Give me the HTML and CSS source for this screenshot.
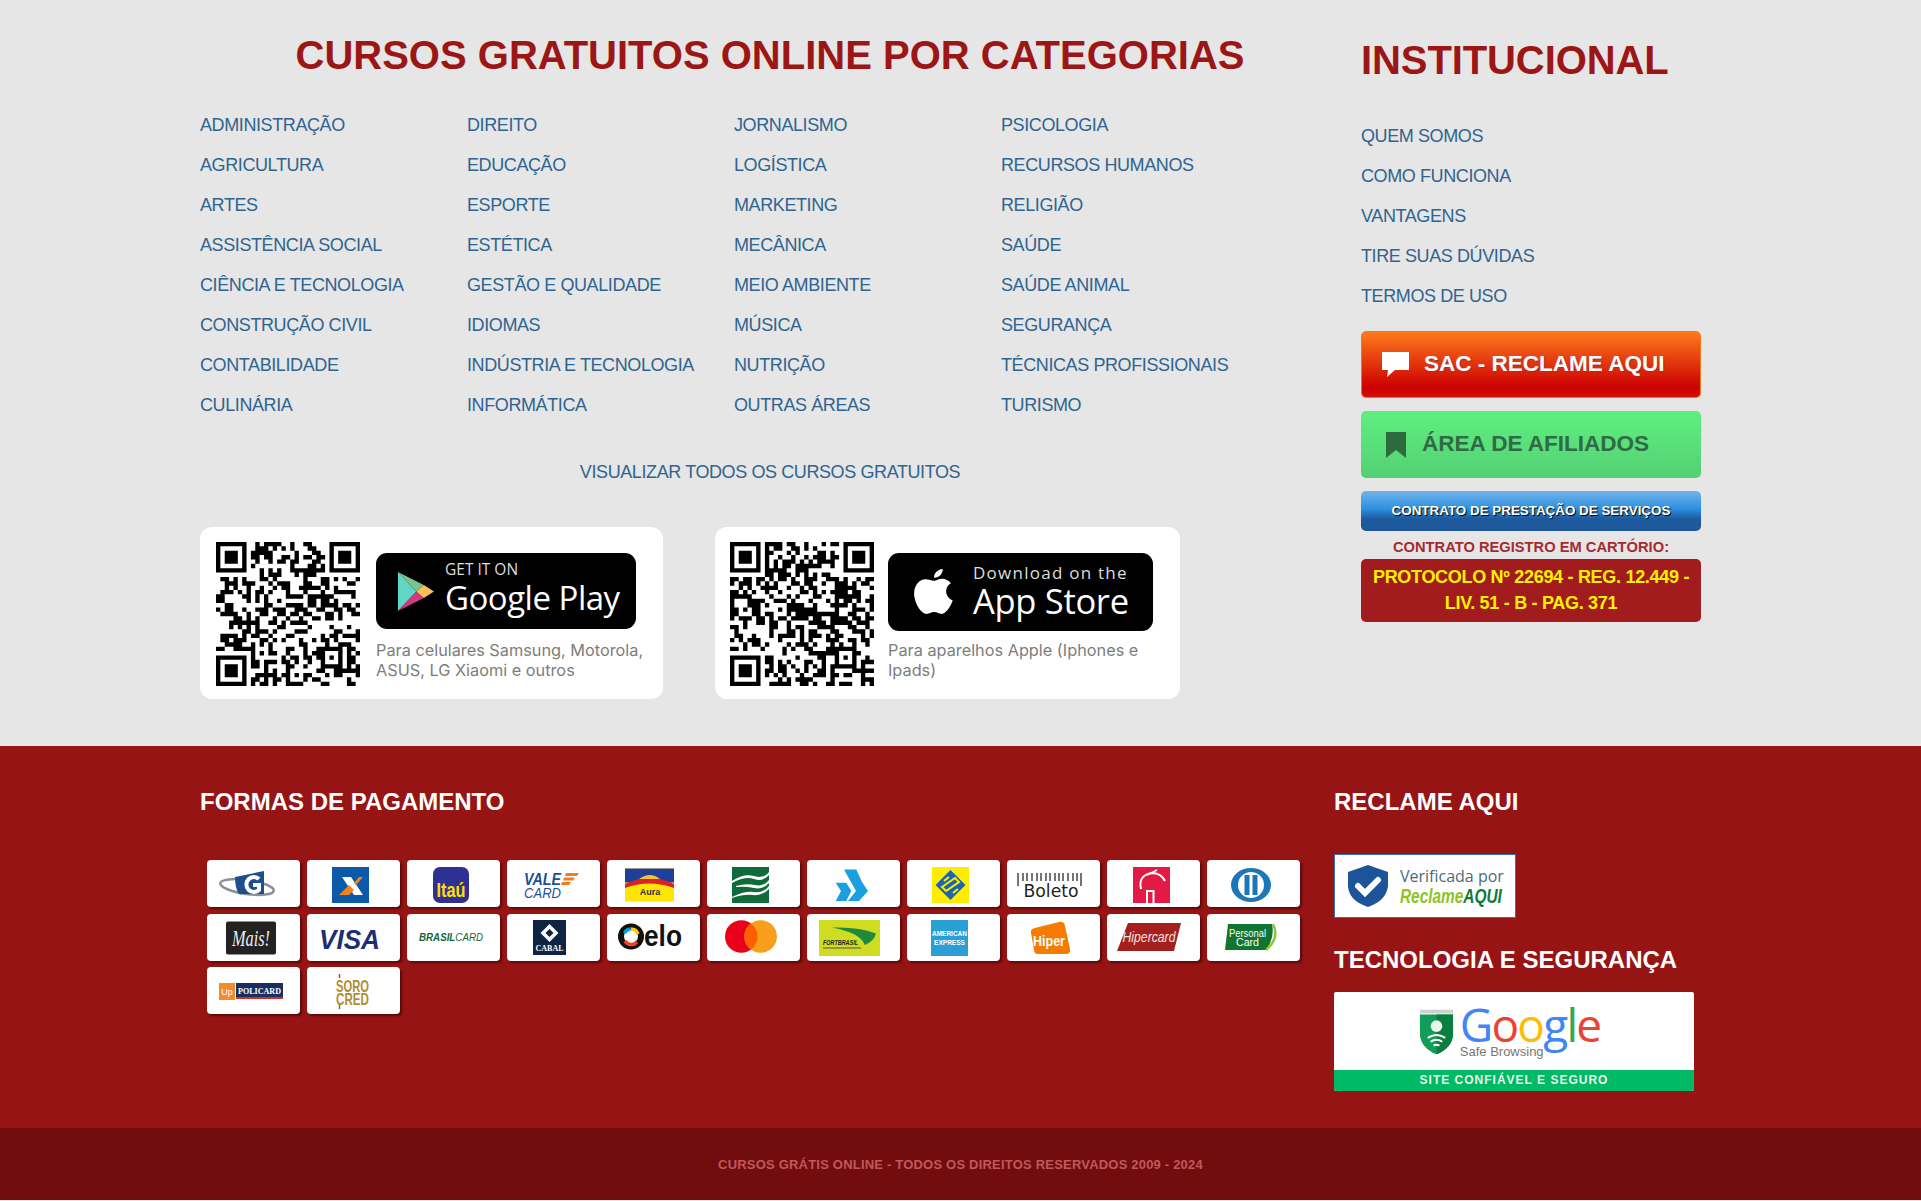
FILE: index.html
```html
<!DOCTYPE html>
<html lang="pt-BR">
<head>
    <meta charset="UTF-8">
    <title>Cursos Grátis Online</title>
    <link rel="stylesheet" href="styles.css">
</head>
<body>
    <section class="top">
        <div class="wrap top-wrap">
            <div class="cats">
                <h2 class="cats-title">CURSOS GRATUITOS ONLINE POR CATEGORIAS</h2>
                <div class="cat-grid">
                    <ul class="links">
                        <li>ADMINISTRAÇÃO</li><li>AGRICULTURA</li><li>ARTES</li><li>ASSISTÊNCIA SOCIAL</li><li>CIÊNCIA E TECNOLOGIA</li><li>CONSTRUÇÃO CIVIL</li><li>CONTABILIDADE</li><li>CULINÁRIA</li>
                    </ul>
                    <ul class="links">
                        <li>DIREITO</li><li>EDUCAÇÃO</li><li>ESPORTE</li><li>ESTÉTICA</li><li>GESTÃO E QUALIDADE</li><li>IDIOMAS</li><li>INDÚSTRIA E TECNOLOGIA</li><li>INFORMÁTICA</li>
                    </ul>
                    <ul class="links">
                        <li>JORNALISMO</li><li>LOGÍSTICA</li><li>MARKETING</li><li>MECÂNICA</li><li>MEIO AMBIENTE</li><li>MÚSICA</li><li>NUTRIÇÃO</li><li>OUTRAS ÁREAS</li>
                    </ul>
                    <ul class="links">
                        <li>PSICOLOGIA</li><li>RECURSOS HUMANOS</li><li>RELIGIÃO</li><li>SAÚDE</li><li>SAÚDE ANIMAL</li><li>SEGURANÇA</li><li>TÉCNICAS PROFISSIONAIS</li><li>TURISMO</li>
                    </ul>
                </div>
                <p class="see-all">VISUALIZAR TODOS OS CURSOS GRATUITOS</p>
                <div class="apps">
                    <div class="app-card">
                        <svg class="qr" viewBox="0 0 33 33"><path id="qr-play"/></svg>
                        <div class="app-info">
                            <div class="badge badge-play">
                                <svg class="play-icon" viewBox="0 0 40 44">
                                    <path d="M1 1L21 22 1 43z" fill="#5fd6c6"/>
                                    <path d="M1 1L29 15 21 22z" fill="#7cc48f"/>
                                    <path d="M1 43L29 29 21 22z" fill="#d0397d"/>
                                    <path d="M29 15L40 22 29 29 21 22z" fill="#fbbf55"/>
                                </svg>
                                <div class="badge-text play-text">
                                    <span class="play-small">GET IT ON</span>
                                    <span class="play-big">Google Play</span>
                                </div>
                            </div>
                            <p class="app-note">Para celulares Samsung, Motorola, ASUS, LG Xiaomi e outros</p>
                        </div>
                    </div>
                    <div class="app-card app-card-apple">
                        <svg class="qr" viewBox="0 0 33 33"><path id="qr-apple"/></svg>
                        <div class="app-info">
                            <div class="badge badge-apple">
                                <svg class="apple-icon" viewBox="0 0 40 48">
                                    <path d="M29 1c.4 4-3.400 8.800-8.400 8.600C20 5.200 24.600 1.200 29 1z" fill="#fff"/>
                                    <path d="M20.500 12.500c2 0 4.500-2 8-2 3.200 0 6.500 1.500 8.500 4.500-7 4.200-5.800 14 1.800 16.800-1.600 5-6.500 13.200-10.800 13.200-2.800 0-4-1.800-7.300-1.800-3.400 0-4.800 1.800-7.300 1.800C7.500 45 1 33.500 1 25c0-8.400 5.400-14 11-14 3.500 0 6.400 1.500 8.500 1.500z" fill="#fff"/>
                                </svg>
                                <div class="badge-text apple-text">
                                    <span class="apple-small">Download on the</span>
                                    <span class="apple-big">App Store</span>
                                </div>
                            </div>
                            <p class="app-note app-note-apple">Para aparelhos Apple (Iphones e Ipads)</p>
                        </div>
                    </div>
                </div>
            </div>
            <aside class="inst">
                <h2 class="inst-title">INSTITUCIONAL</h2>
                <ul class="links inst-links">
                    <li>QUEM SOMOS</li><li>COMO FUNCIONA</li><li>VANTAGENS</li><li>TIRE SUAS DÚVIDAS</li><li>TERMOS DE USO</li>
                </ul>
                <a class="btn btn-sac">
                    <svg class="btn-icon" viewBox="0 0 27 25"><path d="M0 0h27v18H13l-8 7 1-7H0z" fill="#fff"/></svg>
                    SAC - RECLAME AQUI
                </a>
                <a class="btn btn-afil">
                    <svg class="btn-icon-b" viewBox="0 0 20 26"><path d="M0 0h20v26L10 18 0 26z" fill="#2d6b3f"/></svg>
                    ÁREA DE AFILIADOS
                </a>
                <a class="btn-contract">CONTRATO DE PRESTAÇÃO DE SERVIÇOS</a>
                <p class="reg-label">CONTRATO REGISTRO EM CARTÓRIO:</p>
                <div class="reg-box">PROTOCOLO Nº 22694 - REG. 12.449 - LIV. 51 - B - PAG. 371</div>
            </aside>
        </div>
    </section>

    <section class="pay">
        <div class="wrap pay-wrap">
            <div class="pay-main">
                <h3 class="pay-title">FORMAS DE PAGAMENTO</h3>
                <div class="pay-grid">
                    <!-- row 1 -->
                    <div class="pay-card"><svg class="logo" viewBox="0 0 90 36"><ellipse cx="41" cy="20" rx="27" ry="7" transform="rotate(8 41 20)" fill="none" stroke="#8a8f99" stroke-width="2.500"/><path d="M29 10l29-6v23H33q-4-6-4-17z" fill="#1f4e8c"/><path d="M53 12a7.500 7.500 0 1 0 0 11v-5h-6" fill="none" stroke="#fff" stroke-width="4"/></svg></div>
                    <div class="pay-card"><svg class="logo" viewBox="0 0 90 36"><rect x="26" y="0" width="37" height="36" fill="#0b5aa8"/><path d="M36 10h9l12 18h-9z" fill="#fff"/><path d="M33 28l10-10 5 5-5 5zM48 16l5-6h4l-7 8z" fill="#f58220"/></svg></div>
                    <div class="pay-card"><svg class="logo" viewBox="0 0 90 36"><rect x="27" y="0" width="36" height="36" rx="7" fill="#2f3192"/><text x="45" y="30" class="t-itau" textLength="29" lengthAdjust="spacingAndGlyphs">Itaú</text></svg></div>
                    <div class="pay-card"><svg class="logo" viewBox="0 0 90 36"><text x="18" y="18" class="t-vale" textLength="37" lengthAdjust="spacingAndGlyphs">VALE</text><text x="18" y="31" class="t-card" textLength="37" lengthAdjust="spacingAndGlyphs">CARD</text><path d="M60 6h13l-2 3H59zM58 10.500h11l-2 3H57zM56 15h9l-2 3h-8z" fill="#f47b20"/></svg></div>
                    <div class="pay-card"><svg class="logo" viewBox="0 0 90 36"><rect x="19" y="1.500" width="49" height="33" fill="#ffe600"/><rect x="19" y="1.500" width="49" height="14" fill="#1f3f9a"/><path d="M19 17q25-12 49 0v4q-25-9-49 0z" fill="#d8232a"/><path d="M33 12q11-8 21 0z" fill="#fbc02d"/><text x="44" y="28" class="t-aura">Aura</text></svg></div>
                    <div class="pay-card"><svg class="logo" viewBox="0 0 90 36"><rect x="26" y="0" width="37" height="36" fill="#0f6b3a"/><path d="M26 14q12-8 22-5t15-4v3q-6 7-15 4t-22 4zM30 19q10-3 19-1t14-5v3q-6 7-15 5t-18-1zM26 30q12-6 22-5t15-6v3q-7 7-16 6t-21 3z" fill="#fff"/></svg></div>
                    <div class="pay-card"><svg class="logo" viewBox="0 0 90 36"><path d="M38 2.500h12.300L56 15l6 9-9 10H42l8-10-4.700-8.200z" fill="#1aa0e0"/><path d="M29.700 15.800h10.600l5 8.200-5 10H29.700l5.300-10z" fill="#1aa0e0"/></svg></div>
                    <div class="pay-card"><svg class="logo" viewBox="0 0 90 36"><rect x="26" y="0" width="37" height="36" fill="#ffed00"/><path d="M44.500 3l15 15-15 15-15-15z" fill="#1a66b3"/><path d="M36 20l13-9 4 4-13 9zM38 14l5-4M47 26l5-4" stroke="#ffed00" stroke-width="2" fill="none"/></svg></div>
                    <div class="pay-card"><svg class="logo" viewBox="0 0 90 36"><path d="M12 6v13M17 6v8M21 6v8M26 6v8M31 6v8M35 6v8M40 6v8M44 6v8M49 6v8M53 6v8M57 6v8M62 6v8M67 6v8M71 6v8M75 6v13" stroke="#666" stroke-width="1.800"/><text x="45" y="30" class="t-boleto" textLength="55" lengthAdjust="spacingAndGlyphs">Boleto</text></svg></div>
                    <div class="pay-card"><svg class="logo" viewBox="0 0 90 36"><rect x="27" y="0" width="37" height="36" fill="#e31b44"/><path d="M35 22q-3-14 11-16 9 0 13 8" fill="none" stroke="#fff" stroke-width="2"/><path d="M41 36V24h6.500v12" fill="none" stroke="#fff" stroke-width="2"/><path d="M41 8l10-5" stroke="#fff" stroke-width="1.500"/></svg></div>
                    <div class="pay-card"><svg class="logo" viewBox="0 0 90 36"><ellipse cx="45" cy="18" rx="20" ry="17" fill="#1d76b8"/><ellipse cx="45" cy="18" rx="13" ry="13" fill="#fff"/><rect x="38.500" y="8" width="5" height="20" fill="#1d76b8"/><rect x="46.500" y="8" width="5" height="20" fill="#1d76b8"/></svg></div>

                    <!-- row 2 -->
                    <div class="pay-card"><svg class="logo" viewBox="0 0 90 36"><rect x="20" y="1.500" width="50" height="33" rx="2" fill="#222"/><text x="45" y="26" class="t-mais" textLength="38" lengthAdjust="spacingAndGlyphs">Mais!</text></svg></div>
                    <div class="pay-card"><svg class="logo" viewBox="0 0 90 36"><text x="43.500" y="28.500" class="t-visa" textLength="61" lengthAdjust="spacingAndGlyphs">VISA</text></svg></div>
                    <div class="pay-card"><svg class="logo" viewBox="0 0 90 36"><text x="45" y="21" class="t-brasil" textLength="64" lengthAdjust="spacingAndGlyphs">BRASIL<tspan class="t-brasil-b">CARD</tspan></text></svg></div>
                    <div class="pay-card"><svg class="logo" viewBox="0 0 90 36"><rect x="27" y="0" width="33" height="35" fill="#0f2344"/><path d="M43.500 4l9 9-9 9-9-9z" fill="#fff"/><path d="M43.500 9l4 4-4 4-4-4z" fill="#0f2344"/><text x="43.500" y="31" class="t-cabal">CABAL</text></svg></div>
                    <div class="pay-card"><svg class="logo" viewBox="0 0 90 36"><circle cx="25" cy="16.500" r="10" fill="none" stroke="#111" stroke-width="6"/><path d="M25 9a7.500 7.500 0 0 1 7 5" stroke="#ffcb05" stroke-width="3.500" fill="none"/><path d="M18.500 13a7.500 7.500 0 0 1 6-4" stroke="#00a4e0" stroke-width="3.500" fill="none"/><path d="M19 21a7.500 7.500 0 0 0 12 1" stroke="#ef4123" stroke-width="3.500" fill="none"/><text x="38" y="26" class="t-elo" textLength="38" lengthAdjust="spacingAndGlyphs">elo</text></svg></div>
                    <div class="pay-card"><svg class="logo" viewBox="0 0 90 36"><circle cx="35.300" cy="16.500" r="16.300" fill="#eb001b"/><circle cx="54.600" cy="16.500" r="16.300" fill="#f79e1b"/><path d="M45 3.400a16.300 16.300 0 0 1 0 26.200 16.300 16.300 0 0 1 0-26.200z" fill="#ff5f00"/></svg></div>
                    <div class="pay-card"><svg class="logo" viewBox="0 0 90 36"><rect x="13" y="0" width="61" height="36" fill="#cfdc21"/><path d="M26 7.500q27-1 44 6-2 8-11.300 11.500Q55 13 26 7.500z" fill="#1e8b3a"/><text x="17" y="25" class="t-fort" textLength="35" lengthAdjust="spacingAndGlyphs">FORTBRASIL</text><path d="M17 28h38" stroke="#555" stroke-width="1"/></svg></div>
                    <div class="pay-card"><svg class="logo" viewBox="0 0 90 36"><rect x="25" y="0" width="37" height="36" fill="#2a9fd6"/><text x="43.500" y="16" class="t-amex" textLength="35" lengthAdjust="spacingAndGlyphs">AMERICAN</text><text x="43.500" y="25" class="t-amex" textLength="31" lengthAdjust="spacingAndGlyphs">EXPRESS</text></svg></div>
                    <div class="pay-card"><svg class="logo" viewBox="0 0 90 36"><path d="M29 8l24-6q5-1 6 4l5 23q1 4-3 5H32q-4 0-4-4l-3-17q-1-4 4-5z" fill="#f57c00"/><text x="43" y="26" class="t-hiper" textLength="32" lengthAdjust="spacingAndGlyphs">Hiper</text></svg></div>
                    <div class="pay-card"><svg class="logo" viewBox="0 0 90 36"><path d="M22 3h53l-7 28H11z" fill="#a3201f"/><text x="43" y="22" class="t-hipercard" textLength="53" lengthAdjust="spacingAndGlyphs">Hipercard</text></svg></div>
                    <div class="pay-card"><svg class="logo" viewBox="0 0 90 36"><path d="M22 4h44q3 14-6 26H19z" fill="#11742f"/><path d="M67 4q7 14-7 26" fill="none" stroke="#8cc63f" stroke-width="2.500"/><text x="41.500" y="16.500" class="t-personal" textLength="37" lengthAdjust="spacingAndGlyphs">Personal</text><text x="41.500" y="26" class="t-personal" textLength="23" lengthAdjust="spacingAndGlyphs">Card</text></svg></div>

                    <!-- row 3 -->
                    <div class="pay-card"><svg class="logo" viewBox="0 0 90 36"><rect x="13" y="9" width="16" height="17" fill="#f58a2b"/><text x="21" y="21" class="t-up">Up</text><rect x="30" y="9" width="47" height="14" fill="#1b2f5e"/><rect x="30" y="23" width="47" height="2" fill="#d32f2f"/><text x="53.500" y="19.500" class="t-poli" textLength="43" lengthAdjust="spacingAndGlyphs">POLICARD</text></svg></div>
                    <div class="pay-card"><svg class="logo" viewBox="0 0 90 36"><text x="46.500" y="17.500" class="t-soro" textLength="33" lengthAdjust="spacingAndGlyphs">SORO</text><text x="46.500" y="31" class="t-soro" textLength="33" lengthAdjust="spacingAndGlyphs">CRED</text><path d="M33.500 0v4" stroke="#c0392b" stroke-width="1.500"/><path d="M33.500 31v4" stroke="#3d8b3d" stroke-width="1.500"/></svg></div>
                </div>
            </div>
            <aside class="pay-side">
                <h3 class="pay-title">RECLAME AQUI</h3>
                <div class="ra-seal">
                    <svg class="ra-shield" viewBox="0 0 44 44"><path d="M22 1l20 7v14q-2 15-20 21Q3 37 2 22V8z" fill="#1d5497"/><path d="M12 22l7 7 13-13" fill="none" stroke="#fff" stroke-width="6" stroke-linecap="round"/></svg>
                    <div class="ra-text">
                        <span class="ra-small">Verificada por</span>
                        <span class="ra-big"><span class="ra-green">Reclame</span>AQUI</span>
                    </div>
                </div>
                <h3 class="tec-title">TECNOLOGIA E SEGURANÇA</h3>
                <div class="safe">
                    <div class="safe-top">
                        <svg class="safe-shield" viewBox="0 0 36 48"><path d="M1 1h34v4H1z" fill="#cfcfcf"/><path d="M1 6h34v21q-1 13-17 20Q2 40 1 27z" fill="#0f9d58"/><path d="M18 6h17v21q-1 13-17 20z" fill="#0b7d3e"/><circle cx="18" cy="18" r="6" fill="#e8f5ea"/><path d="M9 30q9-6 18 0M12 34q6-4 12 0M15 38q3-2 6 0" stroke="#fff" stroke-width="2" fill="none"/></svg>
                        <div class="safe-brand">
                            <span class="g-word"><span class="g-b">G</span><span class="g-r">o</span><span class="g-y">o</span><span class="g-b">g</span><span class="g-g">l</span><span class="g-r">e</span></span>
                            <span class="safe-sub">Safe Browsing</span>
                        </div>
                    </div>
                    <div class="safe-bar">SITE CONFIÁVEL E SEGURO</div>
                </div>
            </aside>
        </div>
    </section>

    <footer class="foot">CURSOS GRÁTIS ONLINE - TODOS OS DIREITOS RESERVADOS 2009 - 2024</footer>

    <script src="qr.js"></script>
</body>
</html>
```
FILE: styles.css
```css
* {
    box-sizing: border-box;
}
body {
    margin: 0;
    font-family: "Liberation Sans", Arial, sans-serif;
    background-color: #e6e6e6;
}
h2, h3, p, ul {
    margin: 0;
    padding: 0;
}
.wrap {
    width: 1521px;
    margin: 0 auto;
    display: flex;
}

/* top block */
.top {
    height: 746px;
    padding-top: 30px;
}
.cats {
    width: 1161px;
}
.cats-title {
    width: 1140px;
    font-size: 40px;
    line-height: 50px;
    color: #9d1616;
    text-align: center;
    margin-bottom: 25px;
}
.cat-grid {
    display: flex;
}
.cat-grid .links {
    width: 267px;
}
.links {
    list-style: none;
}
.links li {
    height: 40px;
    line-height: 40px;
    font-size: 18px;
    letter-spacing: -0.4px;
    color: #2f6490;
    white-space: nowrap;
}
.see-all {
    width: 1140px;
    margin-top: 27px;
    text-align: center;
    font-size: 18px;
    letter-spacing: -0.4px;
    line-height: 40px;
    color: #2f6490;
}
.apps {
    display: flex;
    gap: 52px;
    margin-top: 35px;
}
.app-card {
    width: 463px;
    height: 172px;
    background: #fff;
    border-radius: 12px;
    display: flex;
    padding: 15px 16px;
    gap: 16px;
}
.app-card-apple {
    width: 465px;
    padding-left: 15px;
    gap: 14px;
}
.qr {
    width: 144px;
    height: 144px;
    flex: none;
}
.app-info {
    padding-top: 11px;
}
.badge {
    background: #000;
    border-radius: 11px;
    height: 76px;
    width: 260px;
    display: flex;
    align-items: center;
    color: #fff;
}
.badge-apple {
    width: 265px;
    height: 78px;
}
.badge-text {
    display: flex;
    flex-direction: column;
}
.play-text {
    margin-top: -4px;
}
.apple-text {
    margin-top: -3px;
}
.play-icon {
    width: 37px;
    height: 41px;
    margin: 0 11px 0 21px;
}
.play-small {
    font-family: "Open Sans", sans-serif;
    font-size: 15.500px;
    line-height: 17px;
    color: #ddd;
}
.play-big {
    font-family: "Open Sans", sans-serif;
    font-size: 33px;
    line-height: 40px;
    letter-spacing: -0.5px;
}
.apple-icon {
    width: 41px;
    height: 49px;
    margin: 0 19px 0 25px;
}
.apple-small {
    font-family: "Open Sans", sans-serif;
    font-size: 17px;
    line-height: 20px;
    letter-spacing: 1.250px;
    color: #ddd;
}
.apple-big {
    font-family: "Open Sans", sans-serif;
    font-size: 34.500px;
    line-height: 36px;
    letter-spacing: -0.3px;
}
.app-note {
    margin-top: 11px;
    font-family: Inter, sans-serif;
    font-size: 16.300px;
    line-height: 20px;
    color: #7d7d7d;
    width: 272px;
}
.app-note-apple {
    margin-top: 9px;
}

/* side block */
.inst {
    width: 360px;
}
.inst-title {
    font-size: 40px;
    line-height: 50px;
    color: #9d1616;
    margin: 5px 0 31px;
    letter-spacing: -0.1px;
}
.inst-links li {
    height: 40px;
}
.btn {
    display: flex;
    align-items: center;
    width: 340px;
    height: 67px;
    padding-bottom: 2px;
    border-radius: 5px;
    font-size: 22.500px;
    font-weight: bold;
}
.btn-sac {
    margin-top: 15px;
    background: linear-gradient(#ff7a1c, #cd0000 85%, #d41000);
    border: 1px solid #f0781c;
    color: #fff;
    text-shadow: 1px 1px 1px #933;
}
.btn-afil {
    margin-top: 13px;
    background: linear-gradient(#5ef07f, #55cf75);
    color: #2f6b44;
}
.btn-icon {
    width: 27px;
    height: 25px;
    margin: 2px 15px 0 20px;
}
.btn-icon-b {
    width: 20px;
    height: 26px;
    margin: 2px 16px 0 25px;
}
.btn-contract {
    display: block;
    width: 340px;
    height: 40px;
    margin-top: 13px;
    border-radius: 5px;
    background: linear-gradient(#71b3ea, #2c8fe0 45%, #1e5a9e 70%, #1d5799);
    color: #fff;
    font-size: 13.400px;
    font-weight: bold;
    line-height: 40px;
    text-align: center;
    text-shadow: 1px 1px 1px #000;
}
.reg-label {
    width: 340px;
    margin-top: 7px;
    font-size: 14.700px;
    font-weight: bold;
    line-height: 19px;
    color: #a52a2f;
    text-align: center;
}
.reg-box {
    width: 340px;
    height: 63px;
    margin-top: 2px;
    padding: 5px 8px;
    border-radius: 5px;
    background: #a31c1d;
    color: #fff200;
    font-size: 18px;
    font-weight: bold;
    line-height: 26px;
    text-align: center;
    letter-spacing: -0.3px;
}

/* payment block */
.pay {
    height: 382px;
    background: #961414;
    padding-top: 41px;
}
.pay-main {
    width: 1134px;
}
.pay-title {
    font-size: 24px;
    line-height: 30px;
    color: #fff;
}
.pay-grid {
    display: grid;
    grid-template-columns: repeat(11, 93px);
    grid-auto-rows: 47px;
    column-gap: 7px;
    row-gap: 6.500px;
    margin: 43px 0 0 7px;
}
.pay-card {
    background: #fff;
    border-radius: 4px;
    box-shadow: 2px 2px 2px #5c0a0a;
    display: flex;
    align-items: center;
    justify-content: center;
    padding: 2px 5px 0 0;
}
.logo {
    width: 90px;
    height: 36px;
    flex: none;
}
.logo text {
    font-family: "Liberation Sans", sans-serif;
    text-anchor: middle;
}
.logo .t-itau { font-size: 19.500px; font-weight: bold; fill: #ffe000; }
.logo .t-vale { font-size: 16px; font-weight: bold; font-style: italic; fill: #1c4f9c; text-anchor: start; }
.logo .t-card { font-size: 14.500px; font-style: italic; fill: #1c4f9c; text-anchor: start; }
.logo .t-aura { font-size: 9px; font-weight: bold; fill: #333; }
.logo .t-boleto { font-family: "DejaVu Sans", sans-serif; font-size: 17px; fill: #222; }
.logo .t-mais { font-family: "Liberation Serif", serif; font-size: 23px; font-style: italic; fill: #eee; }
.logo .t-visa { font-size: 28px; font-weight: bold; font-style: italic; fill: #1d2f6f; }
.logo .t-brasil { font-size: 11.500px; font-weight: bold; font-style: italic; fill: #16663a; }
.logo .t-brasil-b { font-weight: normal; }
.logo .t-cabal { font-family: "Liberation Serif", serif; font-size: 8px; font-weight: bold; fill: #fff; }
.logo .t-elo { font-size: 30px; font-weight: bold; fill: #111; text-anchor: start; }
.logo .t-fort { font-size: 7.500px; font-weight: bold; font-style: italic; fill: #222; text-anchor: start; }
.logo .t-amex { font-size: 7px; font-weight: bold; fill: #fff; }
.logo .t-hiper { font-size: 14px; font-weight: bold; fill: #fff; }
.logo .t-hipercard { font-size: 14px; font-style: italic; fill: #f3e3e3; }
.logo .t-personal { font-size: 11px; fill: #fff; }
.logo .t-up { font-size: 9px; fill: #fff; }
.logo .t-poli { font-family: "Liberation Serif", serif; font-size: 8px; font-weight: bold; fill: #fff; }
.logo .t-soro { font-size: 17px; font-weight: bold; fill: #b08d36; }

.pay-side {
    width: 387px;
}
.ra-seal {
    width: 182px;
    height: 64px;
    margin-top: 37px;
    background: #fff;
    border: 1px solid #3a6ea8;
    display: flex;
    align-items: center;
    padding-left: 11px;
    gap: 10px;
}
.ra-shield {
    width: 44px;
    height: 44px;
    flex: none;
}
.ra-text {
    display: flex;
    flex-direction: column;
}
.ra-small {
    font-family: "Open Sans", sans-serif;
    font-size: 16px;
    line-height: 20px;
    color: #4a6a80;
    white-space: nowrap;
}
.ra-big {
    font-size: 19.500px;
    line-height: 21px;
    font-weight: bold;
    font-style: italic;
    color: #0f7a3a;
    white-space: nowrap;
    transform: scaleX(0.79);
    transform-origin: left;
}
.ra-green {
    color: #8fc31f;
}
.tec-title {
    font-size: 24px;
    line-height: 30px;
    color: #fff;
    margin-top: 27px;
}
.safe {
    width: 360px;
    height: 99px;
    margin-top: 17px;
    background: #fff;
    border-radius: 2px;
    overflow: hidden;
    display: flex;
    flex-direction: column;
}
.safe-top {
    flex: 1;
    display: flex;
    justify-content: center;
    align-items: flex-start;
    gap: 6px;
    padding: 13px 9px 0 0;
}
.safe-shield {
    width: 35px;
    height: 48px;
    margin-top: 3px;
}
.safe-brand {
    display: flex;
    flex-direction: column;
}
.g-word {
    font-family: "Open Sans", sans-serif;
    font-size: 46px;
    font-weight: 500;
    line-height: 38px;
    letter-spacing: -1.800px;
}
.g-b { color: #4285f4; }
.g-r { color: #ea4335; }
.g-y { color: #fbbc05; }
.g-g { color: #34a853; }
.safe-sub {
    margin-top: 2px;
    font-size: 13px;
    line-height: 14px;
    color: #777;
}
.safe-bar {
    height: 21px;
    background: #00b964;
    color: #e6f7ee;
    font-size: 12px;
    font-weight: bold;
    line-height: 21px;
    letter-spacing: 1px;
    text-align: center;
}

/* bottom */
.foot {
    height: 72px;
    background: #730c0c;
    color: #c0585c;
    font-size: 13px;
    font-weight: bold;
    line-height: 73px;
    letter-spacing: 0.2px;
    text-align: center;
}
```
FILE: qr.js
```js
// Qr-looking squares, one path per code
const SIZE = 33;

function drawQr(id, seed) {
    let state = seed;
    let last = 0;
    let d = '';

    function next() {
        state = (state * 1103515245 + 12345) % 2147483648;
        return (state >> 16) & 3;
    }
    function reserved(x, y) {
        const finder = (x < 8 && y < 8) || (x >= SIZE - 8 && y < 8) || (x < 8 && y >= SIZE - 8);
        const align = x >= 24 && x <= 28 && y >= 24 && y <= 28;
        return finder || align;
    }

    for (let y = 0; y < SIZE; y++) {
        for (let x = 0; x < SIZE; x++) {
            if (reserved(x, y)) continue;
            const r = next();
            last = r === 0 ? last : (r === 1 ? 1 - last : (r === 2 ? 1 : 0));
            if (last) d += `M${x} ${y}h1v1h-1z`;
        }
    }

    // Finder squares, fill-rule evenodd makes the rings
    [[0, 0], [SIZE - 7, 0], [0, SIZE - 7]].forEach(([x, y]) => {
        d += `M${x} ${y}h7v7h-7zM${x + 1} ${y + 1}h5v5h-5zM${x + 2} ${y + 2}h3v3h-3z`;
    });
    // Alignment square
    d += 'M24 24h5v5h-5zM25 25h3v3h-3zM26 26h1v1h-1z';

    const path = document.getElementById(id);
    path.setAttribute('fill-rule', 'evenodd');
    path.setAttribute('d', d);
}

drawQr('qr-play', 7);
drawQr('qr-apple', 91);
```
